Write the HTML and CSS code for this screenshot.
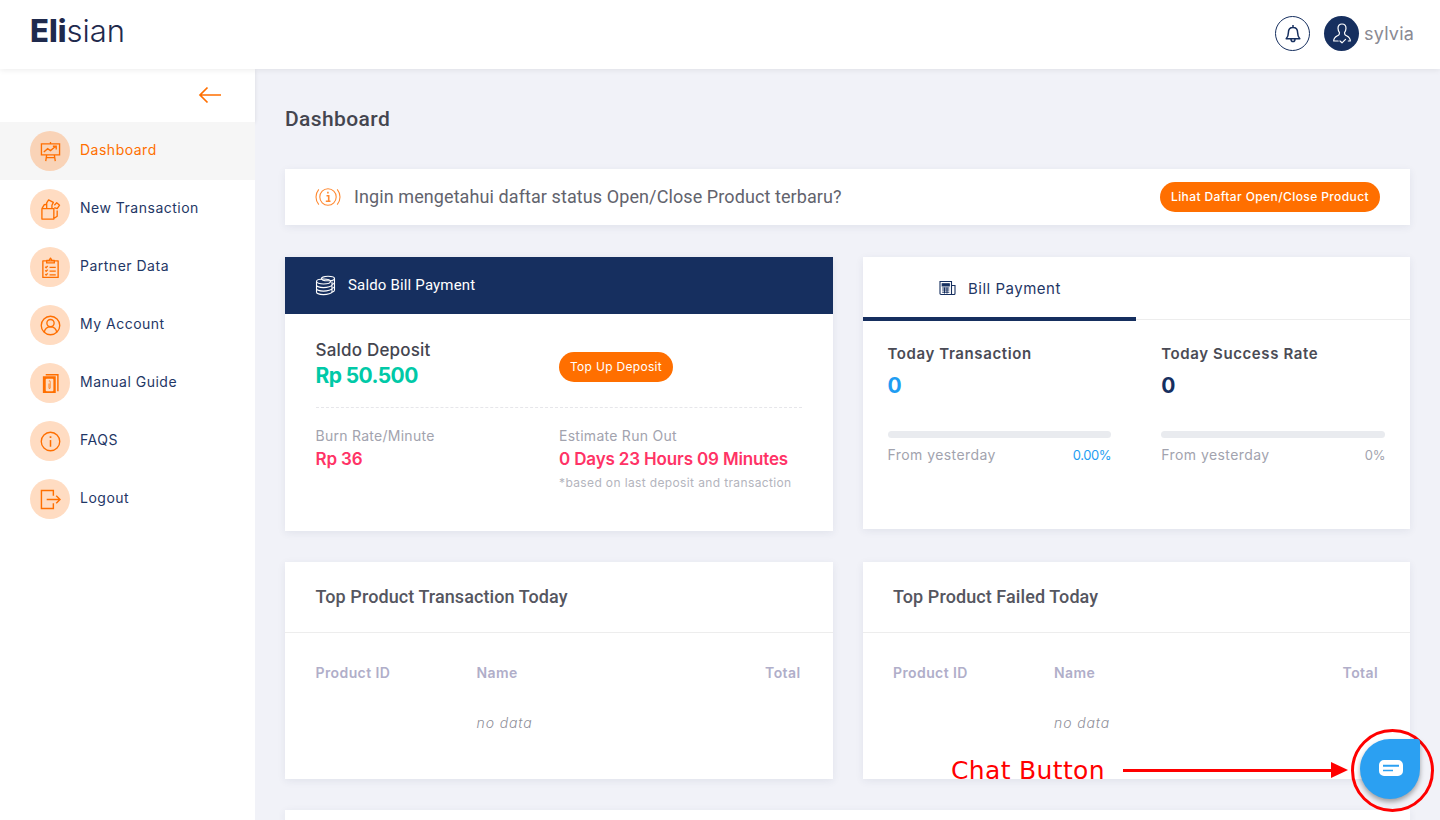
FILE: index.html
```html
<!DOCTYPE html>
<html lang="en">
<head>
  <meta charset="UTF-8">
  <meta name="viewport" content="width=device-width, initial-scale=1.0">
  <title>Elisian Dashboard</title>
  <link rel="stylesheet" href="styles.css">
</head>
<body>

  <header class="topbar">
    <div class="logo"><b>Eli</b>sian</div>
    <div class="topbar-right">
      <span class="bell">
        <svg width="20" height="20" viewBox="0 0 20 20" fill="none" stroke="#162f5f" stroke-width="1.5" stroke-linejoin="round"><path d="M10 1v2.600M10 3.600c-3 0-4.600 2.300-4.600 5 0 3-.9 4.800-2.200 6.200h13.600c-1.300-1.400-2.200-3.200-2.200-6.200 0-2.700-1.600-5-4.600-5z"/><path d="M8 14.900c0 1.600.8 2.600 2 2.600s2-1 2-2.600"/></svg>
      </span>
      <span class="avatar">
        <svg width="22" height="24" viewBox="0 0 22 24" fill="none" stroke="#fff" stroke-width="1.200" stroke-linecap="round" stroke-linejoin="round"><path d="M11 2c-2.500 0-4 1.800-4 4.300 0 2 .8 3.300 1.500 4.400 0 1.400-.3 2.200-1.500 2.800-2 1-4.300 1.700-4.300 5.500h4.500M11 2c2.500 0 4 1.800 4 4.300 0 2-.8 3.300-1.500 4.400 0 1.400.3 2.200 1.500 2.800 2 1 4.300 1.700 4.300 5.500h-2"/><path d="M9 19l2 1.800 3.500-3.500"/></svg>
      </span>
      <span class="username">sylvia</span>
    </div>
  </header>

  <div class="layout">
    <aside class="sidebar">
      <div class="sidebar-toggle">
        <svg width="24" height="18" viewBox="0 0 24 18" fill="none" stroke="#ff6f00" stroke-width="1.700"><path d="M23 9H2M9.500 1.500L2 9l7.500 7.500"/></svg>
      </div>
      <nav class="menu">
        <a class="menu-item active">
          <span class="menu-icon">
            <svg viewBox="0 0 22 22" fill="none" stroke="#ff6f00" stroke-width="1.400"><path d="M1.500 3h19v11.500h-19zM11 3V1M4 11.500l4-3.500 3 2 5.500-4.500M13.500 5.500H17V9M7 14.500l-1 6.500M15 14.500l1 6.500M6.700 17.500h8.600"/></svg>
          </span>
          <span class="menu-label">Dashboard</span>
        </a>
        <a class="menu-item">
          <span class="menu-icon">
            <svg viewBox="0 0 22 22" fill="none" stroke="#ff6f00" stroke-width="1.400" stroke-linejoin="round"><path d="M2 10h12.500v11H2zM2 10l2.500-4 2.500-.5M14.500 10v10.500l3.500-2.500v-6M7 10V4l2-3 5 2.500-1.500 3V10M15 6.500l2.500-2.500 3 2.500-2.500 3.500-3-1"/></svg>
          </span>
          <span class="menu-label">New Transaction</span>
        </a>
        <a class="menu-item">
          <span class="menu-icon">
            <svg viewBox="0 0 22 22" fill="none" stroke="#ff6f00" stroke-width="1.400" stroke-linejoin="round"><path d="M3 4h16v17.500H3zM7 6.200V3.500h2.500L11 1.200l1.500 2.300H15v2.700zM5.500 10.200l1 1 1.500-1.800M5.500 14l1 1 1.500-1.800M5.500 18l1 1 1.500-1.800M10 10.800h6.500M10 14.800h6.500M10 18.800h6.500"/></svg>
          </span>
          <span class="menu-label">Partner Data</span>
        </a>
        <a class="menu-item">
          <span class="menu-icon">
            <svg viewBox="0 0 22 22" fill="none" stroke="#ff6f00" stroke-width="1.400"><circle cx="11" cy="11" r="9.700"/><circle cx="11" cy="8.500" r="3.800"/><path d="M4.500 18c.6-3.500 3-5.500 6.500-5.500s5.900 2 6.500 5.500"/></svg>
          </span>
          <span class="menu-label">My Account</span>
        </a>
        <a class="menu-item">
          <span class="menu-icon">
            <svg viewBox="0 0 22 22" fill="#ff6f00"><path d="M3 3.500h13.500V21H3zM6 1h13.500v18H18V2.500H6z"/><rect x="6" y="6" width="8" height="13" rx="1" fill="#ffdcc2"/><path d="M9 8.500c1-1 2-.5 2 .6v6.400c0 1.400-2 1.400-2 0V11h.8v4.500c0 .4.500.4.500 0V9.200c0-.5-.5-.6-.9-.2z"/></svg>
          </span>
          <span class="menu-label">Manual Guide</span>
        </a>
        <a class="menu-item">
          <span class="menu-icon">
            <svg viewBox="0 0 22 22" fill="none" stroke="#ff6f00" stroke-width="1.400"><circle cx="11" cy="11" r="9.700"/><path d="M11 9.500v7" stroke-width="1.600"/><path d="M11 5.500v1.800" stroke-width="1.800"/></svg>
          </span>
          <span class="menu-label">FAQS</span>
        </a>
        <a class="menu-item">
          <span class="menu-icon">
            <svg viewBox="0 0 22 22" fill="none" stroke="#ff6f00" stroke-width="1.500"><path d="M14 7V1.500H1.500v19H14V15M7 11h14M17 7l4 4-4 4"/></svg>
          </span>
          <span class="menu-label">Logout</span>
        </a>
      </nav>
    </aside>

    <main class="content">
      <h1 class="page-title">Dashboard</h1>

      <div class="notice">
        <svg class="notice-icon" width="26" height="22" viewBox="0 0 26 22" fill="none" stroke="#ff8a33" stroke-width="1.100"><circle cx="13" cy="11" r="8.200"/><path d="M3.800 3.300A12 12 0 0 0 3.800 18.700M22.200 3.300A12 12 0 0 1 22.200 18.700"/><path d="M11.500 9.800h2.200v5M10.800 15.200h4.700M12.900 5.800v1.800" stroke-width="1.600"/></svg>
        <span class="notice-text">Ingin mengetahui daftar status Open/Close Product terbaru?</span>
        <a class="pill notice-btn">Lihat Daftar Open/Close Product</a>
      </div>

      <section class="row row-stats">
        <div class="card saldo">
          <div class="saldo-head">
            <svg width="21" height="21" viewBox="0 0 21 21" fill="none" stroke="#fff" stroke-width="1.100"><ellipse cx="13" cy="3.500" rx="6.500" ry="2.300"/><path d="M19.500 3.500v11.500c0 1-1 1.800-2.500 2.100M19.500 7.300c0 1-1 1.800-2.500 2.100M19.500 11.200c0 1-1 1.800-2.500 2.100"/><ellipse cx="8.500" cy="6.500" rx="7" ry="2.500"/><path d="M1.500 6.500V17c0 1.300 3 2.600 7 2.600s8.500-1.300 8.500-2.600V6.500M1.500 10c0 1.300 3 2.600 7 2.600s8.500-1.300 8.500-2.600M1.500 13.500c0 1.300 3 2.600 7 2.600s8.500-1.300 8.500-2.600"/></svg>
            <span>Saldo Bill Payment</span>
          </div>
          <div class="saldo-body">
            <div class="saldo-top">
              <div class="col">
                <div class="saldo-label">Saldo Deposit</div>
                <div class="saldo-amount">Rp 50.500</div>
              </div>
              <div class="col">
                <a class="pill">Top Up Deposit</a>
              </div>
            </div>
            <div class="saldo-bottom">
              <div class="col">
                <div class="muted-label">Burn Rate/Minute</div>
                <div class="red-value">Rp 36</div>
              </div>
              <div class="col">
                <div class="muted-label">Estimate Run Out</div>
                <div class="red-value">0 Days 23 Hours 09 Minutes</div>
                <div class="footnote">*based on last deposit and transaction</div>
              </div>
            </div>
          </div>
        </div>

        <div class="card bill">
          <div class="tabs">
            <div class="tab">
              <svg width="18" height="16" viewBox="0 0 18 16" fill="none" stroke="#162f5f" stroke-width="1.100"><path d="M1 1.500h11.500v13H2a1 1 0 0 1-1-1zM12.500 5.500H16v8a1 1 0 0 1-1 1h-2.500"/><path d="M3.200 3.700h7.100v2.200H3.200z" fill="#162f5f"/><path d="M3.200 8h7.100M3.200 10h7.100M3.200 12.200h7.100M5.500 7.500v6M8 7.500v6" stroke-width="1"/></svg>
              Bill Payment
            </div>
          </div>
          <div class="stats">
            <div class="stat">
              <div class="stat-title">Today Transaction</div>
              <div class="stat-value blue">0</div>
              <div class="progress"></div>
              <div class="stat-foot"><span>From yesterday</span><span class="stat-pct blue">0.00%</span></div>
            </div>
            <div class="stat">
              <div class="stat-title">Today Success Rate</div>
              <div class="stat-value navy">0</div>
              <div class="progress"></div>
              <div class="stat-foot"><span>From yesterday</span><span class="stat-pct">0%</span></div>
            </div>
          </div>
        </div>
      </section>

      <section class="row">
        <div class="card top-product">
          <h2 class="card-title">Top Product Transaction Today</h2>
          <div class="product-table">
            <div class="table-head"><span>Product ID</span><span>Name</span><span class="right">Total</span></div>
            <div class="no-data">no data</div>
          </div>
        </div>
        <div class="card top-product">
          <h2 class="card-title">Top Product Failed Today</h2>
          <div class="product-table">
            <div class="table-head"><span>Product ID</span><span>Name</span><span class="right">Total</span></div>
            <div class="no-data">no data</div>
          </div>
        </div>
      </section>

      <div class="card last-card"></div>
    </main>
  </div>

  <!-- annotation on top of the page -->
  <div class="annotation">Chat Button</div>
  <div class="annotation-line"></div>
  <div class="annotation-head"></div>
  <div class="chat-ring"></div>
  <button class="chat-btn">
    <svg width="24" height="16" viewBox="0 0 24 16"><path fill="#fff" fill-rule="evenodd" d="M5 0h14a5 5 0 0 1 5 5v6a5 5 0 0 1-5 5H5a5 5 0 0 1-5-5V5a5 5 0 0 1 5-5zM4 4.700v2h16v-2zM4 9.700v1.600h10V9.700z"/></svg>
  </button>

</body>
</html>
```

FILE: styles.css
```css
* {
  box-sizing: border-box;
}

html, body {
  height: 100%;
}

body {
  margin: 0;
  overflow: hidden;
  font-family: 'Inter', 'Noto Sans', sans-serif;
  background-color: #f1f2f8;
  color: #162f5f;
}

/* Top bar */
.topbar {
  position: relative;
  z-index: 2;
  height: 69px;
  padding: 0 26px 0 30px;
  display: flex;
  align-items: center;
  justify-content: space-between;
  background-color: #fff;
  box-shadow: 0 1px 6px rgba(0, 0, 0, 0.08);
}

.logo {
  font-family: 'Inter', sans-serif;
  font-size: 31px;
  font-weight: 300;
  color: #1f2a4d;
  margin-top: -9px;
}

.logo b {
  font-weight: 800;
}

.topbar-right {
  display: flex;
  align-items: center;
  margin-top: -2px;
}

.bell {
  width: 35px;
  height: 35px;
  border: 1px solid #162f5f;
  border-radius: 50%;
  display: flex;
  align-items: center;
  justify-content: center;
}

.avatar {
  width: 35px;
  height: 35px;
  margin-left: 14px;
  border-radius: 50%;
  background-color: #162f5f;
  display: flex;
  align-items: center;
  justify-content: center;
}

.username {
  margin-left: 5px;
  font-size: 18px;
  letter-spacing: 0.2px;
  color: #8a8a93;
}

.layout {
  display: flex;
  height: 751px;
}

/* Sidebar */
.sidebar {
  width: 255px;
  flex-shrink: 0;
  background-color: #fff;
}

.sidebar-toggle {
  height: 53px;
  padding: 0 33px 2px 0;
  display: flex;
  align-items: center;
  justify-content: flex-end;
  box-shadow: 0 1px 4px rgba(0, 0, 0, 0.1);
}

.menu-item {
  height: 58px;
  padding-left: 30px;
  display: flex;
  align-items: center;
  font-size: 14px;
  letter-spacing: 0.5px;
  color: #1f3766;
}

.menu-label {
  margin-bottom: 4px;
}

.menu-item.active {
  background-color: #f6f6f6;
  color: #ff6f00;
}

.menu-icon {
  width: 40px;
  height: 40px;
  margin-right: 10px;
  border-radius: 50%;
  background-color: #ffdcc2;
  display: flex;
  align-items: center;
  justify-content: center;
}

.active .menu-icon {
  background-color: #f9d3b7;
}

.menu-icon svg {
  width: 21px;
  height: 21px;
}

/* Main content */
.content {
  flex: 1;
  padding: 0 30px;
}

.page-title {
  margin: 37px 0 37px;
  height: 26px;
  font-family: 'Roboto', sans-serif;
  font-size: 21px;
  line-height: 26px;
  font-weight: 500;
  letter-spacing: 0.4px;
  color: #44454f;
}

.card, .notice {
  background-color: #fff;
  box-shadow: 0 2px 8px rgba(40, 50, 90, 0.08);
}

.notice {
  height: 56px;
  margin-bottom: 32px;
  padding: 0 30px;
  display: flex;
  align-items: center;
}

.notice-icon {
  margin-right: 13px;
}

.notice-text {
  flex: 1;
  margin-bottom: 2px;
  font-family: 'Roboto', sans-serif;
  font-size: 18px;
  letter-spacing: 0.09px;
  color: #62636d;
}

.pill {
  display: inline-block;
  height: 30px;
  padding: 0 11px;
  border-radius: 15px;
  background-color: #ff6f00;
  color: #fff;
  font-size: 12px;
  letter-spacing: 0.3px;
  line-height: 30px;
  white-space: nowrap;
}

.notice-btn {
  font-weight: 500;
  letter-spacing: 0.4px;
}

.row {
  display: grid;
  grid-template-columns: 1fr 1fr;
  column-gap: 30px;
  margin-bottom: 31px;
}

.row-stats {
  align-items: start;
}

/* Saldo card */
.saldo {
  height: 274px;
}

.saldo-head {
  height: 57px;
  padding: 0 0 0 30px;
  display: flex;
  align-items: center;
  gap: 12px;
  background-color: #162f5f;
  color: #fff;
  font-family: 'Roboto', sans-serif;
  font-size: 15px;
  letter-spacing: 0.17px;
}

.saldo-head span {
  margin-bottom: 2px;
}

.saldo-body {
  padding: 0 31px 0 30.5px;
}

.saldo-top, .saldo-bottom {
  display: grid;
  grid-template-columns: 243.5px 1fr;
}

.saldo-top {
  height: 94px;
  padding-top: 26px;
  border-bottom: 1px dashed #e6e6ea;
}

.saldo-label {
  font-size: 17px;
  line-height: 21px;
  font-weight: 500;
  letter-spacing: 0.2px;
  color: #44454f;
}

.saldo-amount {
  font-size: 21px;
  line-height: 30px;
  font-weight: 700;
  letter-spacing: -0.6px;
  color: #00c9a7;
}

.saldo-top .pill {
  margin-top: 12px;
}

.saldo-bottom {
  padding-top: 19px;
}

.muted-label {
  font-size: 14px;
  line-height: 18px;
  letter-spacing: 0.27px;
  color: #a2a3ae;
}

.red-value {
  margin-top: 2px;
  font-size: 17px;
  line-height: 24px;
  font-weight: 600;
  letter-spacing: -0.15px;
  color: #ff3366;
}

.footnote {
  margin-top: 4px;
  font-size: 12px;
  line-height: 16px;
  letter-spacing: 0.37px;
  color: #b3b4bd;
}

/* Bill payment card */
.bill {
  height: 272px;
}

.tabs {
  height: 63px;
  border-bottom: 1px solid #ededed;
}

.tab {
  width: 273.5px;
  height: 64px;
  padding: 2px 0 0 76.5px;
  display: flex;
  align-items: center;
  gap: 11px;
  border-bottom: 4px solid #162f5f;
  font-size: 15px;
  letter-spacing: 0.5px;
  color: #1f3766;
}

.tab svg {
  margin-bottom: 1px;
}

.stats {
  padding: 0 25px;
  display: grid;
  grid-template-columns: 1fr 1fr;
  column-gap: 50px;
}

.stat-title {
  margin-top: 24px;
  font-size: 15px;
  line-height: 20px;
  font-weight: 600;
  letter-spacing: 0.6px;
  color: #4a4b55;
}

.stat-value {
  margin-top: 9px;
  font-size: 21px;
  line-height: 26px;
  font-weight: 700;
}

.blue {
  color: #1e9df2;
}

.navy {
  color: #162f5f;
}

.progress {
  height: 7px;
  margin-top: 32px;
  border-radius: 4px;
  background-color: #e9ebef;
}

.stat-foot {
  margin-top: 7px;
  display: flex;
  align-items: baseline;
  justify-content: space-between;
  font-size: 14px;
  line-height: 20px;
  letter-spacing: 0.43px;
  color: #a2a3ae;
}

.stat-pct {
  font-size: 13px;
  letter-spacing: -0.4px;
}

/* Top product cards */
.top-product {
  height: 217px;
}

.card-title {
  height: 71px;
  margin: 0;
  padding: 0 30.5px 1px;
  display: flex;
  align-items: center;
  border-bottom: 1px solid #ededed;
  font-family: 'Roboto', sans-serif;
  font-size: 18px;
  font-weight: 500;
  letter-spacing: 0.08px;
  color: #55565f;
}

.product-table {
  padding: 30px 32px 0 30.5px;
}

.table-head {
  display: grid;
  grid-template-columns: 161px 1fr auto;
  font-size: 14px;
  line-height: 20px;
  font-weight: 600;
  letter-spacing: 0.4px;
  color: #b0aec9;
}

.no-data {
  margin-top: 30px;
  padding-left: 161px;
  font-size: 14px;
  line-height: 20px;
  font-style: italic;
  font-weight: 300;
  letter-spacing: 0.9px;
  color: #8f8f9a;
}

.last-card {
  height: 10px;
}

/* Chat button and the red annotation around it */
.chat-btn {
  position: absolute;
  left: 1360px;
  top: 739px;
  width: 60px;
  height: 60px;
  padding: 0 0 2px 2px;
  border: none;
  border-radius: 50% 3px 50% 50%;
  background-color: #2ba0f2;
  box-shadow: 0 3px 5px rgba(0, 0, 0, 0.35);
  display: flex;
  align-items: center;
  justify-content: center;
}

.chat-ring {
  position: absolute;
  left: 1351px;
  top: 729px;
  width: 83px;
  height: 83px;
  border: 3px solid #f00;
  border-radius: 50%;
}

.annotation {
  position: absolute;
  left: 951px;
  top: 756px;
  font-family: 'DejaVu Sans', sans-serif;
  font-size: 25px;
  letter-spacing: 0.35px;
  color: #f00;
}

.annotation-line {
  position: absolute;
  left: 1123px;
  top: 769px;
  width: 212px;
  height: 3px;
  background-color: #f00;
}

.annotation-head {
  position: absolute;
  left: 1331px;
  top: 762px;
  border-left: 17px solid #f00;
  border-top: 8px solid transparent;
  border-bottom: 8px solid transparent;
}
```
